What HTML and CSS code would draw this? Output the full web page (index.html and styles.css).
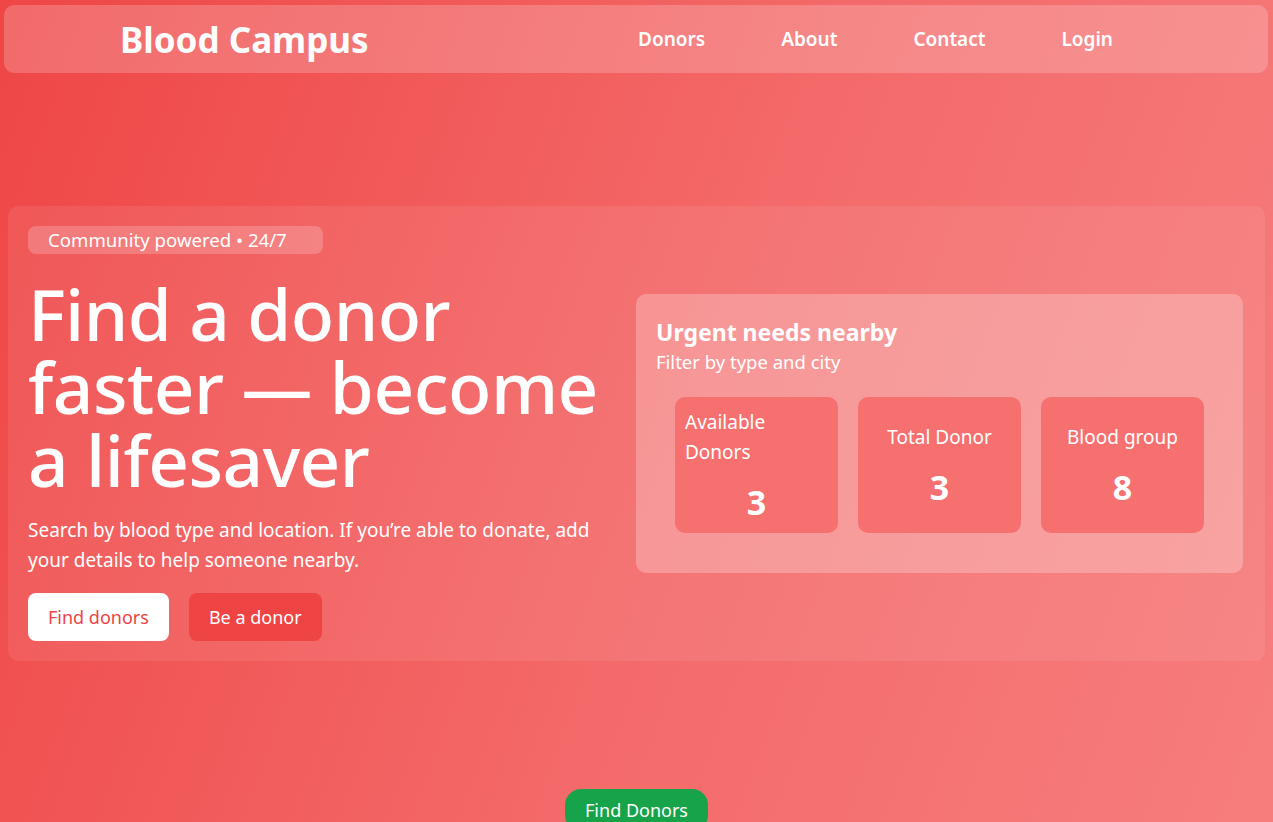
FILE: index.html
```html
<!DOCTYPE html>
<html lang="en">
<head>
    <meta charset="UTF-8">
    <meta name="viewport" content="width=device-width, initial-scale=1.0">
    <title>Blood Campus</title>
    <link rel="stylesheet" href="styles.css">
</head>
<body>
    <div class="navbar">
        <div class="brand">Blood Campus</div>
        <div class="nav-links">
            <a href="#">Donors</a>
            <a href="#">About</a>
            <a href="#">Contact</a>
            <a href="#">Login</a>
        </div>
    </div>

    <div class="hero">
        <div class="hero-left">
            <span class="badge">Community powered • 24/7</span>
            <h1>Find a donor faster — become a lifesaver</h1>
            <p class="lead">Search by blood type and location. If you’re able to donate, add your details to help someone nearby.</p>
            <div class="actions">
                <button class="btn btn-light">Find donors</button>
                <button class="btn btn-red">Be a donor</button>
            </div>
        </div>

        <!-- stats panel -->
        <div class="panel">
            <div class="panel-title">Urgent needs nearby</div>
            <div class="panel-sub">Filter by type and city</div>
            <div class="stats">
                <div class="stat stat-left">
                    <div class="stat-label">Available Donors</div>
                    <div class="stat-num">3</div>
                </div>
                <div class="stat">
                    <div class="stat-label">Total Donor</div>
                    <div class="stat-num">3</div>
                </div>
                <div class="stat">
                    <div class="stat-label">Blood group</div>
                    <div class="stat-num">8</div>
                </div>
            </div>
        </div>
    </div>

    <div class="bottom">
        <button class="btn-green">Find Donors</button>
    </div>
</body>
</html>
```

FILE: styles.css
```css
body {
    font-family: "Noto Sans", "Open Sans", sans-serif;
    margin: 0;
    padding: 5px 0 0 0;
    min-height: 100vh;
    color: #fff;
    background: linear-gradient(110deg, #ef4646 0%, #f46a6a 55%, #f77d7d 100%);
    overflow: hidden;
}
.navbar {
    display: flex;
    align-items: center;
    justify-content: space-between;
    height: 68px;
    margin: 0 5px 0 4px;
    padding: 0 155px 0 116px;
    background: rgba(255, 255, 255, 0.2);
    border-radius: 10px;
}
.brand {
    font-size: 35px;
    font-weight: bold;
}
.nav-links {
    display: flex;
    gap: 76px;
}
.nav-links a {
    color: #fff;
    text-decoration: none;
    font-size: 19px;
    font-weight: 600;
}
.hero {
    display: grid;
    grid-template-columns: 1fr 607px;
    gap: 20px;
    align-items: center;
    margin: 133px 8px 0 8px;
    padding: 20px 22px 20px 20px;
    background: rgba(255, 255, 255, 0.08);
    border-radius: 10px;
}
.badge {
    display: inline-block;
    padding: 0 36px 0 20px;
    height: 28px;
    line-height: 28px;
    font-size: 18.6px;
    background: rgba(255, 255, 255, 0.2);
    border-radius: 8px;
}
.hero-left h1 {
    font-size: 71px;
    font-weight: 500;
    line-height: 73px;
    margin: 23px 0 19px 0;
    letter-spacing: -0.5px;
}
.lead {
    font-size: 19px;
    line-height: 30px;
    margin: 0;
}
.actions {
    display: flex;
    gap: 20px;
    margin-top: 18px;
}
.btn {
    height: 48px;
    padding: 0 20px;
    font-family: inherit;
    font-size: 18px;
    border: none;
    border-radius: 8px;
    cursor: pointer;
}
.btn-light {
    background: #fff;
    color: #ef4444;
}
.btn-red {
    background: #ef4444;
    color: #fff;
}
.panel {
    background: rgba(255, 255, 255, 0.25);
    border-radius: 10px;
    padding: 22px 20px 40px 20px;
}
.panel-title {
    font-size: 23px;
    font-weight: bold;
    line-height: 32px;
}
.panel-sub {
    font-size: 18.5px;
    line-height: 28px;
}
.stats {
    display: grid;
    grid-template-columns: repeat(3, 163px);
    gap: 20px;
    justify-content: center;
    margin-top: 21px;
}
.stat {
    height: 136px;
    box-sizing: border-box;
    padding: 10px;
    display: flex;
    flex-direction: column;
    justify-content: center;
    align-items: center;
    text-align: center;
    background: #f67070;
    border-radius: 10px;
}
.stat-left {
    align-items: stretch;
    text-align: left;
}
.stat-label {
    font-size: 19px;
    line-height: 30px;
}
.stat-num {
    font-size: 34px;
    font-weight: bold;
    line-height: 42px;
    margin-top: 14px;
    text-align: center;
}
.bottom {
    display: flex;
    justify-content: center;
    margin-top: 128px;
}
.btn-green {
    background: #16a34a;
    color: #fff;
    font-family: inherit;
    font-size: 18px;
    height: 42px;
    padding: 0 20px;
    border: none;
    border-radius: 16px;
    cursor: pointer;
}
```
